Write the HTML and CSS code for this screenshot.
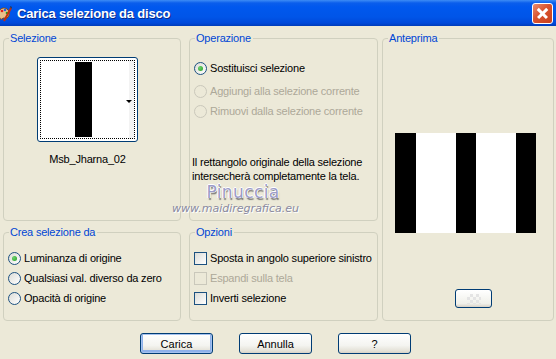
FILE: index.html
```html
<!DOCTYPE html>
<html lang="it">
<head>
    <meta charset="UTF-8">
    <title>Carica selezione da disco</title>
    <link rel="stylesheet" href="styles.css">
</head>
<body>
    <div class="window">
        <div class="titlebar">
            <svg class="app-icon" width="14" height="18" viewBox="0 0 14 18">
                <path d="M1 8 C1 3 6 2 9 4 C12 6 12 11 9 13 C7 14 6 12 4 14 C2 15 1 12 1 8 Z" fill="#e9c08a" stroke="#7a4a1c" stroke-width="1"/>
                <circle cx="4" cy="6" r="1.3" fill="#e02020"/>
                <circle cx="7" cy="5" r="1.3" fill="#2060e0"/>
                <circle cx="9" cy="8" r="1.3" fill="#20a020"/>
                <path d="M6 16 L13 3" stroke="#c03010" stroke-width="2"/>
                <path d="M12 1 L14 2 L13 4 Z" fill="#333"/>
            </svg>
            <span class="title">Carica selezione da disco</span>
            <button class="close" aria-label="Chiudi"></button>
        </div>

        <div class="content">
            <div class="groups">
                <fieldset class="group sel">
                    <legend>Selezione</legend>
                    <div class="thumb-wrap">
                        <div class="thumb">
                            <div class="thumb-inner">
                                <span class="thumb-bar"></span>
                                <span class="thumb-arrow"></span>
                            </div>
                        </div>
                        <div class="thumb-name">Msb_Jharna_02</div>
                    </div>
                </fieldset>

                <fieldset class="group op">
                    <legend>Operazione</legend>
                    <div class="opt first"><span class="radio checked"></span>Sostituisci selezione</div>
                    <div class="opt disabled"><span class="radio"></span>Aggiungi alla selezione corrente</div>
                    <div class="opt disabled"><span class="radio"></span>Rimuovi dalla selezione corrente</div>
                    <p class="note">Il rettangolo originale della selezione<br>intersecherà completamente la tela.</p>
                </fieldset>

                <fieldset class="group preview">
                    <legend>Anteprima</legend>
                    <div class="stripes">
                        <span class="blk w21"></span><span class="wht"></span><span class="blk"></span><span class="wht"></span><span class="blk"></span>
                    </div>
                    <button class="mini-btn"><span class="checker"></span></button>
                </fieldset>

                <fieldset class="group crea">
                    <legend>Crea selezione da</legend>
                    <div class="opt"><span class="radio checked"></span>Luminanza di origine</div>
                    <div class="opt"><span class="radio"></span>Qualsiasi val. diverso da zero</div>
                    <div class="opt"><span class="radio"></span>Opacità di origine</div>
                </fieldset>

                <fieldset class="group opz">
                    <legend>Opzioni</legend>
                    <div class="opt"><span class="check"></span>Sposta in angolo superiore sinistro</div>
                    <div class="opt disabled"><span class="check"></span>Espandi sulla tela</div>
                    <div class="opt"><span class="check"></span>Inverti selezione</div>
                </fieldset>
            </div>

            <div class="buttons">
                <button class="btn default">Carica</button>
                <button class="btn">Annulla</button>
                <button class="btn">?</button>
            </div>
        </div>

        <div class="watermark">
            <div class="wm-name">Pinuccia</div>
            <div class="wm-url">www.maidiregrafica.eu</div>
        </div>
    </div>
</body>
</html>
```

FILE: styles.css
```css
/* Reset */
* {
    box-sizing: border-box;
    margin: 0;
    padding: 0;
}

body {
    background-color: #ece9d8;
    font-family: 'Liberation Sans', Arial, sans-serif;
    font-size: 11px;
    letter-spacing: -0.2px;
    color: #000;
}

.window {
    position: relative;
    width: 556px;
    height: 359px;
    overflow: hidden;
    background-color: #ece9d8;
}

/* Title bar */
.titlebar {
    height: 26px;
    display: flex;
    align-items: center;
    background: linear-gradient(to bottom, #3d8cf5 0, #0a5eec 3px, #0058ee 7px, #0055e8 17px, #0049da 23px, #003cb9 26px);
    color: #fff;
}

.app-icon {
    margin-left: -2px;
    margin-top: 2px;
}

.title {
    margin-left: 5px;
    font-weight: bold;
    font-size: 13px;
    letter-spacing: -0.2px;
    text-shadow: 1px 1px 0 #0a2a8a;
}

.close {
    position: relative;
    margin-left: auto;
    margin-right: 3px;
    width: 21px;
    height: 21px;
    border: 1px solid #fff;
    border-radius: 3px;
    background: linear-gradient(to bottom right, #ea8d70, #d9532e 45%, #c8401c);
}

.close::before,
.close::after {
    content: '';
    position: absolute;
    left: 3px;
    top: 8px;
    width: 13px;
    height: 2.5px;
    background: #fff;
    transform: rotate(45deg);
}

.close::after {
    transform: rotate(-45deg);
}

/* Group boxes */
.groups {
    display: grid;
    grid-template-columns: 178px 189px 168px;
    grid-template-rows: 189px 95px;
    column-gap: 8px;
    row-gap: 5px;
    padding: 6px 0 0 3px;
}

.group {
    border: 1px solid #d0d0bf;
    border-radius: 4px;
    padding: 0;
    min-width: 0;
}

.group legend {
    margin-left: 5px;
    padding: 0 2px 0 1px;
    color: #0046d5;
    line-height: 13px;
}

.preview {
    grid-column: 3;
    grid-row: 1 / span 2;
    margin-left: -4px;
    display: flex;
    flex-direction: column;
    align-items: flex-start;
}

.sel {
    grid-column: 1;
    grid-row: 1;
}

.op {
    grid-column: 2;
    grid-row: 1;
}

.crea {
    grid-column: 1;
    grid-row: 2;
}

.opz {
    grid-column: 2;
    grid-row: 2;
}

/* Selection thumbnail */
.thumb-wrap {
    width: 101px;
    margin: 12px 0 0 33px;
    text-align: center;
}

.thumb {
    width: 101px;
    height: 85px;
    border: 1px solid #003c74;
    border-radius: 3px;
    background: #fff;
    padding: 2px;
}

.thumb-inner {
    position: relative;
    height: 100%;
    border: 1px dotted #000;
    background: linear-gradient(to right, #fff 88px, #f3f3f3 88px);
}

.thumb-bar {
    position: absolute;
    left: 34px;
    top: 1px;
    bottom: 1px;
    width: 17px;
    background: #000;
}

.thumb-arrow {
    position: absolute;
    right: 2px;
    top: 39px;
    border-left: 3px solid transparent;
    border-right: 3px solid transparent;
    border-top: 3px solid #000;
}

.thumb-name {
    margin-top: 11px;
}

/* Options */
.opt {
    display: flex;
    align-items: center;
    height: 20px;
    padding-left: 4px;
    white-space: nowrap;
}

.op .first {
    margin-top: 13px;
    margin-bottom: 3px;
}

.crea .opt:first-of-type,
.opz .opt:first-of-type {
    margin-top: 9px;
}

.opt.disabled {
    color: #aca899;
}

.radio,
.check {
    flex: none;
    width: 13px;
    height: 13px;
    margin-right: 3px;
    border: 1px solid #1c5180;
    background: linear-gradient(to bottom right, #dcdcd7, #fff);
}

.radio {
    border-radius: 50%;
    position: relative;
}

.radio.checked::after {
    content: '';
    position: absolute;
    left: 3px;
    top: 3px;
    width: 5px;
    height: 5px;
    border-radius: 50%;
    background: radial-gradient(circle at 35% 35%, #6fd06f, #21a121);
}

.disabled .radio,
.disabled .check {
    border-color: #cac8bb;
    background: #ece9d8;
}

.note {
    margin: 34px 0 0 2px;
    line-height: 14px;
}

/* Preview */
.stripes {
    display: flex;
    margin: 88px 0 0 12px;
    height: 100px;
}

.stripes span {
    height: 100%;
}

.blk {
    width: 20px;
    background: #000;
}

.blk.w21 {
    width: 21px;
}

.wht {
    width: 40px;
    background: #fff;
}

.mini-btn {
    margin: 56px 0 0 72px;
    width: 37px;
    height: 19px;
    border: 1px solid #003c74;
    border-radius: 3px;
    background: linear-gradient(to bottom, #fff, #f0f0ea 80%, #d6d0c5);
    display: flex;
    align-items: center;
    justify-content: center;
}

.checker {
    width: 14px;
    height: 10px;
    background:
        linear-gradient(45deg, #e4e4e4 25%, transparent 25%, transparent 75%, #e4e4e4 75%),
        linear-gradient(45deg, #e4e4e4 25%, transparent 25%, transparent 75%, #e4e4e4 75%);
    background-size: 6px 6px;
    background-position: 0 0, 3px 3px;
}

/* Buttons */
.buttons {
    display: flex;
    gap: 26px;
    padding: 12px 0 0 140px;
}

.btn {
    width: 73px;
    height: 21px;
    border: 1px solid #003c74;
    border-radius: 3px;
    background: linear-gradient(to bottom, #fff, #f4f4f0 60%, #e3e0d6 90%, #d6d0c5);
    font-family: 'Liberation Sans', Arial, sans-serif;
    font-size: 11px;
    color: #000;
}

.btn.default {
    box-shadow: inset 0 0 0 1px #a5c2ef, inset 0 -1px 0 2px #8eb1ea;
}

/* Watermark */
.watermark {
    position: absolute;
    left: 172px;
    top: 183px;
    width: 126px;
    text-align: center;
    pointer-events: none;
    letter-spacing: 0;
}

.wm-name {
    margin-left: 16px;
    font-family: 'DejaVu Sans', sans-serif;
    font-size: 17px;
    line-height: 19px;
    letter-spacing: 0.4px;
    color: #9c9cc8;
    text-shadow: 1px 0 0 #fff, -1px 0 0 #fff, 0 -1px 0 #fff, 1px 2px 1px #777;
}

.wm-url {
    font-family: 'DejaVu Sans', sans-serif;
    font-size: 11px;
    font-style: italic;
    line-height: 13px;
    color: #8a8aa0;
    text-shadow: 1px 1px 0 #fff;
}
```
